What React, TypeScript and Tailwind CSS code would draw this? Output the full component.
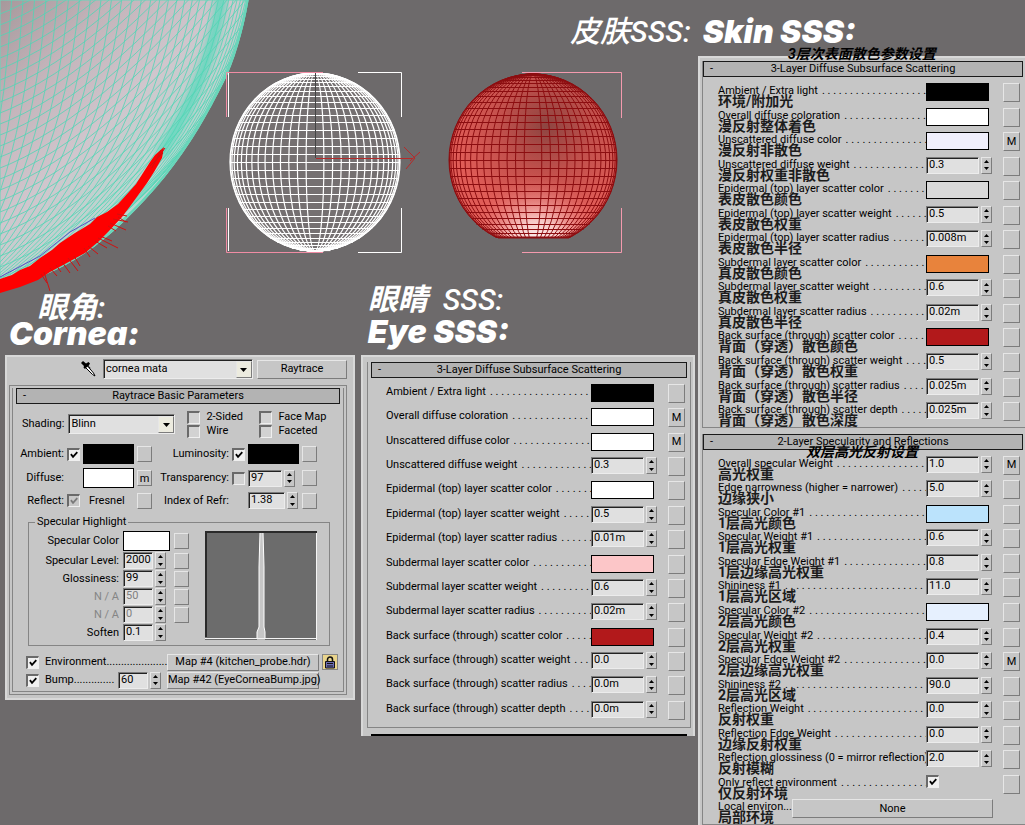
import { useId } from "react";
import type { ReactNode } from "react";

interface Param {
  label: string;
  zh?: string;
  value?: string;
  color?: string;
  check?: boolean;
  wide?: string;
  map?: string;
}

const EYE_ROWS: Param[] = [
  { label: "Ambient / Extra light", color: "bg-black" },
  { label: "Overall diffuse coloration", color: "bg-white", map: "M" },
  { label: "Unscattered diffuse color", color: "bg-white", map: "M" },
  { label: "Unscattered diffuse weight", value: "0.3" },
  { label: "Epidermal (top) layer scatter color", color: "bg-white" },
  { label: "Epidermal (top) layer scatter weight", value: "0.5" },
  { label: "Epidermal (top) layer scatter radius", value: "0.01m" },
  { label: "Subdermal layer scatter color", color: "bg-[#fcc6c8]" },
  { label: "Subdermal layer scatter weight", value: "0.6" },
  { label: "Subdermal layer scatter radius", value: "0.02m" },
  { label: "Back surface (through) scatter color", color: "bg-[#b2191b]" },
  { label: "Back surface (through) scatter weight", value: "0.0" },
  { label: "Back surface (through) scatter radius", value: "0.0m" },
  { label: "Back surface (through) scatter depth", value: "0.0m" },
];

const SKIN_ROWS: Param[] = [
  { label: "Ambient / Extra light", zh: "环境/附加光", color: "bg-black" },
  { label: "Overall diffuse coloration", zh: "漫反射整体着色", color: "bg-white" },
  { label: "Unscattered diffuse color", zh: "漫反射非散色", color: "bg-[#f0effc]", map: "M" },
  { label: "Unscattered diffuse weight", zh: "漫反射权重非散色", value: "0.3" },
  { label: "Epidermal (top) layer scatter color", zh: "表皮散色颜色", color: "bg-[#d9d9d9]" },
  { label: "Epidermal (top) layer scatter weight", zh: "表皮散色权重", value: "0.5" },
  { label: "Epidermal (top) layer scatter radius", zh: "表皮散色半径", value: "0.008m" },
  { label: "Subdermal layer scatter color", zh: "真皮散色颜色", color: "bg-[#e8833c]" },
  { label: "Subdermal layer scatter weight", zh: "真皮散色权重", value: "0.6" },
  { label: "Subdermal layer scatter radius", zh: "真皮散色半径", value: "0.02m" },
  { label: "Back surface (through) scatter color", zh: "背面（穿透）散色颜色", color: "bg-[#b2191b]" },
  { label: "Back surface (through) scatter weight", zh: "背面（穿透）散色权重", value: "0.5" },
  { label: "Back surface (through) scatter radius", zh: "背面（穿透）散色半径", value: "0.025m" },
  { label: "Back surface (through) scatter depth", zh: "背面（穿透）散色深度", value: "0.025m" },
];

const SPECULAR_ROWS: Param[] = [
  { label: "Overall specular Weight", zh: "高光权重", value: "1.0", map: "M" },
  { label: "Edge narrowness (higher = narrower)", zh: "边缘狭小", value: "5.0" },
  { label: "Specular Color #1", zh: "1层高光颜色", color: "bg-[#bbe3fc]" },
  { label: "Specular Weight #1", zh: "1层高光权重", value: "0.6" },
  { label: "Specular Edge Weight #1", zh: "1层边缘高光权重", value: "0.8" },
  { label: "Shininess #1", zh: "1层高光区域", value: "11.0" },
  { label: "Specular Color #2", zh: "2层高光颜色", color: "bg-[#e6f0fe]" },
  { label: "Specular Weight #2", zh: "2层高光权重", value: "0.4" },
  { label: "Specular Edge Weight #2", zh: "2层边缘高光权重", value: "0.0", map: "M" },
  { label: "Shininess #2", zh: "2层高光区域", value: "90.0" },
  { label: "Reflection Weight", zh: "反射权重", value: "0.0" },
  { label: "Reflection Edge Weight", zh: "边缘反射权重", value: "0.0" },
  { label: "Reflection glossiness (0 = mirror reflection)", zh: "反射模糊", value: "2.0" },
  { label: "Only reflect environment", zh: "仅反射环境", check: true },
  { label: "Local environ...", zh: "局部环境", wide: "None" },
];

const raised = "border border-t-[#e6e6e6] border-l-[#e6e6e6] border-b-[#7c7c7c] border-r-[#7c7c7c]";
const sunken = "border border-t-[#7c7c7c] border-l-[#7c7c7c] border-b-[#ececec] border-r-[#ececec] shadow-[inset_1px_1px_#222]";

function MapButton({ text, className = "h-[19px] w-[17px]" }: { text?: string; className?: string }) {
  return (
    <button type="button" aria-label={text ?? "map"} className={`shrink-0 text-center leading-4 ${raised} ${className}`}>
      {text}
    </button>
  );
}

function Spinner() {
  return (
    <span className={`flex h-[17px] w-[11px] shrink-0 flex-col ${raised}`}>
      <button type="button" aria-label="up" className="grid flex-1 place-items-center">
        <svg width="5" height="3" viewBox="0 0 5 3"><path d="M0 3 2.5 0 5 3z" /></svg>
      </button>
      <button type="button" aria-label="down" className="grid flex-1 place-items-center">
        <svg width="5" height="3" viewBox="0 0 5 3"><path d="M0 0 2.5 3 5 0z" /></svg>
      </button>
    </span>
  );
}

function NumberField({ id, value, width, disabled }: { id: string; value: string; width: string; disabled?: boolean }) {
  return (
    <span className="flex shrink-0 gap-0.5">
      <input
        id={id}
        defaultValue={value}
        disabled={disabled}
        className={`h-[17px] bg-[#e0e0e0] pb-0.5 pl-0.5 leading-3 outline-none disabled:text-[#808080] ${sunken} ${width}`}
      />
      <Spinner />
    </span>
  );
}

function CheckBox({ id, checked, disabled }: { id: string; checked?: boolean; disabled?: boolean }) {
  return (
    <span className="relative block size-[13px] shrink-0">
      <input
        id={id}
        type="checkbox"
        defaultChecked={checked}
        disabled={disabled}
        className="peer block size-[13px] appearance-none border-t-2 border-l-2 border-r border-b border-t-[#6a6a6a] border-l-[#6a6a6a] border-r-[#efefef] border-b-[#efefef] bg-[#f0f0f0] not-checked:bg-[#d2d2d2] disabled:bg-[#c8c8c8]"
      />
      <svg
        viewBox="0 0 9 9"
        className="pointer-events-none absolute top-[3px] left-[3px] hidden size-2 fill-none stroke-black stroke-2 peer-checked:block peer-disabled:stroke-[#7a7a7a]"
      >
        <path d="M1 3.5 3.4 6.5 8.2 1.2" />
      </svg>
    </span>
  );
}

function DropDown({ id, value, className }: { id: string; value: string; className: string }) {
  return (
    <span className={`relative block h-5 ${className}`}>
      <select id={id} aria-label={value} className={`h-5 w-full appearance-none bg-[#e0e0e0] pl-0.5 outline-none ${sunken}`}>
        <option>{value}</option>
      </select>
      <span className={`pointer-events-none absolute top-0.5 right-px bottom-px grid w-4 place-items-center bg-[#ecebdf] ${raised}`}>
        <svg width="7" height="4" viewBox="0 0 7 4"><path d="M0 0h7L3.500 4z" /></svg>
      </span>
    </span>
  );
}

function Swatch({ label, color, className = "h-[18px] w-[63px]" }: { label: string; color: string; className?: string }) {
  return <button type="button" aria-label={label} className={`block shrink-0 border border-black ${color} ${className}`} />;
}

function ParamRow({ row }: { row: Param }) {
  const id = useId();
  return (
    <div className="flex min-h-6 flex-1 items-start">
      <div className={row.wide ? "shrink-0 pt-0.5" : "min-w-0 flex-1 pt-0.5"}>
        <div className="flex leading-[11px]">
          <label htmlFor={id} className="shrink-0 whitespace-nowrap">{row.label}</label>
          {!row.wide && (
            <span aria-hidden className="ml-1 min-w-0 flex-1 overflow-hidden whitespace-nowrap">{". ".repeat(36)}</span>
          )}
        </div>
        {row.zh && <p className="text-[14px] leading-[11px] font-bold whitespace-nowrap text-[#1c1c1c]">{row.zh}</p>}
      </div>
      {row.wide ? (
        <button id={id} type="button" className={`mr-[27px] h-[19px] flex-1 ${raised}`}>{row.wide}</button>
      ) : (
        <>
          <div className="w-[77px] shrink-0">
            {row.color && <Swatch label={row.label} color={row.color} />}
            {row.value && <NumberField id={id} value={row.value} width="w-[53px]" />}
            {row.check && <CheckBox id={id} checked />}
          </div>
          <MapButton text={row.map} />
        </>
      )}
    </div>
  );
}

function RolloutTitle({ children }: { children: ReactNode }) {
  return (
    <button type="button" className="relative h-4 w-full shrink-0 border border-[#1a1a1a] bg-[#b3b3b3] text-center leading-3">
      <span className="absolute left-1.5">-</span>
      {children}
    </button>
  );
}

function SphereLines({ cx, cy, rx, ry }: { cx: number; cy: number; rx: number; ry: number }) {
  const lines = [];
  for (let deg = 0; deg <= 90; deg += 6) {
    const r = rx * Math.sin((deg * Math.PI) / 180);
    lines.push(<ellipse key={`m${deg}`} cx={cx} cy={cy} rx={r} ry={ry} />);
  }
  for (let deg = -84.8; deg < 90; deg += 5.3) {
    const a = (deg * Math.PI) / 180;
    const w = rx * Math.cos(a);
    const y = Math.round(cy + ry * Math.sin(a)) + 0.5;
    lines.push(<path key={`p${deg}`} d={`M${cx - w} ${y}H${cx + w}`} />);
  }
  return <g fill="none">{lines}</g>;
}

const HAIRS = [
  [117, 214, 127, 216], [118, 217, 126, 222], [113, 219, 128, 222], [110, 223, 126, 230], [108, 226, 116, 231],
  [98, 238, 118, 248], [95, 241, 107, 248], [100, 236, 112, 241], [88, 246, 98, 254], [84, 248, 90, 257],
  [74, 256, 80, 266], [68, 258, 78, 271], [62, 262, 70, 273], [56, 265, 61, 272], [44, 272, 50, 291],
  [41, 274, 47, 283], [50, 268, 57, 276], [155, 162, 165, 148], [152, 168, 161, 150], [150, 166, 163, 153],
];

function Viewport() {
  const steep = Array.from({ length: 34 }, (_, i) => {
    const x = 250 * Math.sin(((i + 1) / 34) * (Math.PI / 2));
    const f = x / 250;
    return `M${x} 0Q${x - 8 - 35 * f} ${195} ${x - 60 - 190 * f} 293`;
  });
  const shallow = Array.from({ length: 50 }, (_, i) => {
    const y = 16 + i * 11;
    return `M-5 ${y}Q${110} ${y - 42} 262 ${y - 235}`;
  });
  const edge = "M-2-2H249C243 32 235 60 224 82C208 114 190 146 165 177C140 207 112 236 84 254C60 270 30 283-2 291Z";

  return (
    <svg aria-hidden className="block h-[286px] w-full overflow-visible">
      <defs>
        <clipPath id="mesh"><path d={edge} /></clipPath>
        <clipPath id="cut"><rect x="440" y="60" width="190" height="178" /></clipPath>
        <linearGradient id="skin" gradientUnits="userSpaceOnUse" x1="0" y1="0" x2="190" y2="190">
          <stop offset="0" stopColor="#a6989b" />
          <stop offset=".3" stopColor="#c3b4ba" />
          <stop offset=".6" stopColor="#d0c6cd" />
          <stop offset=".85" stopColor="#b9d6d0" />
        </linearGradient>
        <radialGradient id="dark" cx=".58" cy=".3" r=".55">
          <stop offset="0" stopColor="#8d4541" />
          <stop offset=".5" stopColor="#c2504c" />
          <stop offset="1" stopColor="#e05c57" />
        </radialGradient>
        <radialGradient id="glow" cx=".52" cy="1" r=".42">
          <stop offset="0" stopColor="#fff" />
          <stop offset=".35" stopColor="#fbd5d3" stopOpacity=".9" />
          <stop offset="1" stopColor="#e8605c" stopOpacity="0" />
        </radialGradient>
        <filter id="soft"><feGaussianBlur stdDeviation="3" /></filter>
      </defs>

      <g clipPath="url(#mesh)" fill="none">
        <path d={edge} fill="url(#skin)" />
        <path d="M222-5Q210 80 160 155" stroke="#4fdabb" strokeWidth="11" opacity=".75" filter="url(#soft)" />
        <g stroke="#50d5b5" strokeWidth=".8">
          {steep.map((d) => <path key={d} d={d} />)}
          {shallow.map((d) => <path key={d} d={d} />)}
        </g>
        <path d={edge} stroke="#68d6ba" strokeWidth="5" />
      </g>
      <path d="M0 277 40 256 70 232 95 218" stroke="#5a50c8" fill="none" />
      <path
        fill="#fe0000"
        d="M164 147 162 158 154 172 147 183 139 194 131 205 122 217 108 232 98 242 85 253 65 264 50 272 38 280 20 287 0 293V279L12 275 20 270 30 266 40 258 52 250 60 243 75 233 90 224 97 217 107 212 118 204 128 193 136 184 143 173 150 162 155 155Z"
      />
      <g stroke="#d01010" strokeWidth="1">
        {HAIRS.map(([x1, y1, x2, y2]) => <path key={`${x1}-${y1}`} d={`M${x1} ${y1}L${x2} ${y2}`} />)}
      </g>

      <ellipse cx="315" cy="162" rx="85" ry="89" fill="#757071" />
      <g stroke="#fff" strokeWidth="1.2"><SphereLines cx={315} cy={162} rx={85} ry={89} /></g>
      <g fill="none" strokeWidth="1">
        <path stroke="#f08ca4" d="M226.500 117V72.500H323M226.500 208V252.500H323" />
        <path stroke="#fff" d="M228.500 117V73M228.500 208V251M358 72.500H401.500V117M358 252.500H401.500V208" />
        <path stroke="#444" d="M315.500 73V158" />
        <path stroke="#b52a2a" d="M316 158.500H413M404 147 415 158 406 169M420 152 410 161" />
      </g>

      <g clipPath="url(#cut)">
        <ellipse cx="533" cy="160" rx="84" ry="86" fill="url(#dark)" />
        <ellipse cx="533" cy="160" rx="84" ry="86" fill="url(#glow)" />
        <g stroke="#8c0d10"><SphereLines cx={533} cy={160} rx={84} ry={86} /></g>
      </g>
      <path d="M498 237.500H569" stroke="#8c0d10" strokeWidth="2" />
      <path d="M522 72.500H621.500V118M522 252.500H621.500V208" stroke="#f49aae" fill="none" />
    </svg>
  );
}

function ShaderField({ label, children }: { label: string; children: (id: string) => ReactNode }) {
  const id = useId();
  return (
    <>
      <label htmlFor={id} className="text-right whitespace-nowrap">{label}</label>
      {children(id)}
    </>
  );
}

function LabeledCheck({ label }: { label: string }) {
  const id = useId();
  return (
    <span className="flex items-center gap-1.5">
      <CheckBox id={id} />
      <label htmlFor={id} className="leading-[14px] whitespace-nowrap">{label}</label>
    </span>
  );
}

const SPECULAR_FIELDS = [
  { label: "Specular Level:", value: "2000" },
  { label: "Glossiness:", value: "99" },
  { label: "N / A", value: "50", disabled: true },
  { label: "N / A", value: "0", disabled: true },
  { label: "Soften", value: "0.1", noMap: true },
];

function CorneaPanel() {
  const small = "h-4 w-[15px]";
  return (
    <section className="min-w-0 flex-[339] self-start border-2 border-[#d8d8d8] bg-[#c6c6c6] pt-0.5 pr-1.5 pb-[3px] pl-0.5">
      <div className="flex items-center pl-[72px]">
        <svg width="15" height="16" viewBox="0 0 15 16" className="shrink-0">
          <path d="M0 2 2 0l3 2.500L7.500 1 9 2.500 7.500 5l2 2-1.500 1.500L5.500 6.500 4 8 2.500 6.500 3 5z" />
          <path d="m5 7 6.500 6.500L14 15l-1.500-3L7 5.500" fill="#fff" stroke="#000" />
        </svg>
        <DropDown id="material" value="cornea mata" className="ml-[7px] flex-[150]" />
        <button type="button" className={`ml-1 h-[19px] flex-[88] ${raised}`}>Raytrace</button>
      </div>

      <div className="mt-1.5 border border-[#858585] p-0.5">
        <div className="border border-t-0 border-[#858585] px-[3px] pb-0.5">
          <RolloutTitle>Raytrace Basic Parameters</RolloutTitle>

          <div className="mt-1.5 flex items-center pl-1.5">
            <ShaderField label="Shading:">
              {(id) => <DropDown id={id} value="Blinn" className="ml-1 w-[107px]" />}
            </ShaderField>
            <div className="ml-3 grid flex-1 grid-cols-[72px_auto]">
              <LabeledCheck label="2-Sided" />
              <LabeledCheck label="Face Map" />
              <LabeledCheck label="Wire" />
              <LabeledCheck label="Faceted" />
            </div>
          </div>

          <div className="mt-1.5 grid grid-cols-[48px_13px_51px_15px_74px_13px_51px_15px] items-center gap-x-[3px] gap-y-1">
            <ShaderField label="Ambient:">{(id) => <CheckBox id={id} checked />}</ShaderField>
            <Swatch label="Ambient:" color="bg-black" className="h-5 w-full" />
            <MapButton className={small} />
            <ShaderField label="Luminosity:">{(id) => <CheckBox id={id} checked />}</ShaderField>
            <Swatch label="Luminosity:" color="bg-black" className="h-5 w-full" />
            <MapButton className={small} />

            <ShaderField label="Diffuse:">
              {(id) => <button id={id} type="button" className="col-span-2 ml-4 h-5 border border-black bg-white" />}
            </ShaderField>
            <MapButton text="m" className={small} />
            <ShaderField label="Transparency:">{(id) => <CheckBox id={id} />}</ShaderField>
            <NumberField id="transparency" value="97" width="w-[34px]" />
            <MapButton className={small} />

            <ShaderField label="Reflect:">{(id) => <CheckBox id={id} checked disabled />}</ShaderField>
            <span className="pl-1.5">Fresnel</span>
            <MapButton className={small} />
            <label htmlFor="ior" className="text-right whitespace-nowrap">Index of Refr:</label>
            <span className="col-start-7"><NumberField id="ior" value="1.38" width="w-[37px]" /></span>
            <MapButton className={small} />
          </div>

          <fieldset className="mt-1.5 mr-2.5 ml-3 flex justify-between border border-[#858585] pt-0.5 pr-3 pb-1">
            <legend className="ml-1.5 px-0.5 leading-[14px]">Specular Highlight</legend>
            <div className="grid grid-cols-[90px_47px_16px] items-center gap-x-1 gap-y-px">
              <span className="text-right">Specular Color</span>
              <Swatch label="Specular Color" color="bg-white" className="h-5 w-full" />
              <MapButton className={small} />
              {SPECULAR_FIELDS.map((field, i) => (
                <div key={i} className={`contents ${field.disabled ? "text-[#858585]" : ""}`}>
                  <label htmlFor={`spec${i}`} className="text-right whitespace-nowrap">{field.label}</label>
                  <NumberField id={`spec${i}`} value={field.value} width="w-[30px]" disabled={field.disabled} />
                  {field.noMap ? <span /> : <MapButton className={small} />}
                </div>
              ))}
            </div>
            <svg viewBox="0 0 112 109" className="h-[109px] w-[112px] shrink-0">
              <path d="M0 0h112v109H0z" fill="#6c6c6c" />
              <path d="M52 108 52 101 54 96 54 36 55 1h3l1 35v60l1 5v7z" fill="#c6c6c6" stroke="#fff" />
              <path d="M0 107.500H112M111.500 0V109" stroke="#f4f4f4" />
              <path d="M0 1H112M1 0V106" stroke="#2a2a2a" strokeWidth="2" />
            </svg>
          </fieldset>

          <div className="mt-[7px] flex h-[18px] items-center pr-0.5 pl-2.5">
            <CheckBox id="environment" checked />
            <label htmlFor="environment" className="ml-1.5">Environment</label>
            <span aria-hidden className="h-4 min-w-0 flex-1 overflow-hidden whitespace-nowrap">{".".repeat(24)}</span>
            <button type="button" className={`h-[17px] w-[152px] shrink-0 leading-3 whitespace-nowrap ${raised}`}>Map #4 (kitchen_probe.hdr)</button>
            <button type="button" aria-label="lock" className="ml-[3px] grid size-4 shrink-0 place-items-center border border-[#858585] bg-[#e9d48c]">
              <svg width="10" height="13" viewBox="0 0 10 13">
                <path d="M2.500 6V3.500a2.500 2.500 0 0 1 5 0V6" fill="none" stroke="#111" strokeWidth="1.500" />
                <path d="M.5 5.500h9v6.500h-9z" fill="#6b6bb4" stroke="#111" />
                <path d="M2 7.500h6M2 10h6" stroke="#111" />
              </svg>
            </button>
          </div>
          <div className="flex h-[18px] items-center pr-[21px] pl-2.5">
            <CheckBox id="bump" checked />
            <label htmlFor="bump" className="ml-1.5">Bump</label>
            <span aria-hidden className="mr-1 h-4 min-w-0 flex-1 overflow-hidden whitespace-nowrap">{".".repeat(18)}</span>
            <NumberField id="bump-amount" value="60" width="w-[30px]" />
            <button type="button" className={`ml-1.5 h-[17px] w-[152px] shrink-0 leading-3 whitespace-nowrap ${raised}`}>Map #42 (EyeCorneaBump.jpg)</button>
          </div>
        </div>
      </div>
    </section>
  );
}

function EyePanel() {
  return (
    <section className="flex min-h-[381px] min-w-0 flex-[325] flex-col self-start border-x-2 border-t-2 border-[#d8d8d8] bg-[#c6c6c6] pt-[5px] pr-0.5 pl-1">
      <div className="flex flex-1 flex-col border border-t-0 border-[#858585] px-[3px] pb-0.5">
        <RolloutTitle>3-Layer Diffuse Subsurface Scattering</RolloutTitle>
        <div className="mt-1.5 flex flex-1 flex-col pr-0.5 pl-[15px]">
          {EYE_ROWS.map((row) => <ParamRow key={row.label} row={row} />)}
        </div>
      </div>
      <div className="mx-1 mt-1.5 h-0.5 bg-black" />
    </section>
  );
}

export default function App() {
  const display = "font-[Inter,'Noto_Sans_CJK_SC',sans-serif]";
  return (
    <main className="flex min-h-screen bg-[#6d6a6b] font-[Roboto,'Noto_Sans_CJK_SC',sans-serif] text-[11px] leading-4 text-black">
      <div className="flex min-w-0 flex-[698] flex-col">
        <Viewport />
        <div className="flex gap-1.5 pr-[3px] pl-[5px] text-white">
          <h2 className="min-w-0 flex-[347] pt-1.5 pl-1">
            <span className="block pl-7 text-[30px] leading-8 font-bold italic">眼角:</span>
            <span className={`-mt-1 block text-[32px] leading-7 font-black italic ${display}`}>Cornea:</span>
          </h2>
          <h2 className="min-w-0 flex-[337] pl-4">
            <span className="block text-[30px] leading-7 font-bold whitespace-pre italic">眼睛 <span className="font-medium"> SSS:</span></span>
            <span className={`mt-1 block text-[32px] leading-7 font-black italic ${display}`}>Eye SSS:</span>
          </h2>
        </div>
        <div className="mt-[7px] flex gap-1.5 pr-[3px] pl-[5px]">
          <CorneaPanel />
          <EyePanel />
        </div>
      </div>

      <div className="flex min-w-0 flex-[327] flex-col">
        <header className="h-14 pt-4 text-white">
          <h2 className="-ml-32 flex items-center gap-3 text-[30px] leading-8 font-medium whitespace-nowrap italic">
            皮肤SSS:
            <span className={`text-[32px] font-black ${display}`}>Skin SSS:</span>
          </h2>
          <p className="relative -mt-0.5 pl-[90px] text-[14px] leading-4 font-bold text-black italic">3层次表面散色参数设置</p>
        </header>
        <section className="flex flex-1 flex-col border-t-2 border-l-2 border-[#d8d8d8] bg-[#c6c6c6] pt-[3px] pl-0.5">
          <div className="flex grow-[14] flex-col border-b border-l border-[#858585] pr-0.5">
            <RolloutTitle>3-Layer Diffuse Subsurface Scattering</RolloutTitle>
            <div className="mt-1.5 flex flex-1 flex-col pr-[3px] pl-[15px]">
              {SKIN_ROWS.map((row) => <ParamRow key={row.label} row={row} />)}
            </div>
          </div>
          <div className="mt-1.5 flex grow-[15] flex-col border-b border-l border-[#858585] pr-0.5">
            <RolloutTitle>2-Layer Specularity and Reflections</RolloutTitle>
            <p className="relative -mt-1.5 h-3 pl-[103px] text-[14px] leading-4 font-bold italic">双层高光反射设置</p>
            <div className="flex flex-1 flex-col pr-[3px] pl-[15px]">
              {SPECULAR_ROWS.map((row) => <ParamRow key={row.label} row={row} />)}
            </div>
          </div>
        </section>
      </div>
    </main>
  );
}
